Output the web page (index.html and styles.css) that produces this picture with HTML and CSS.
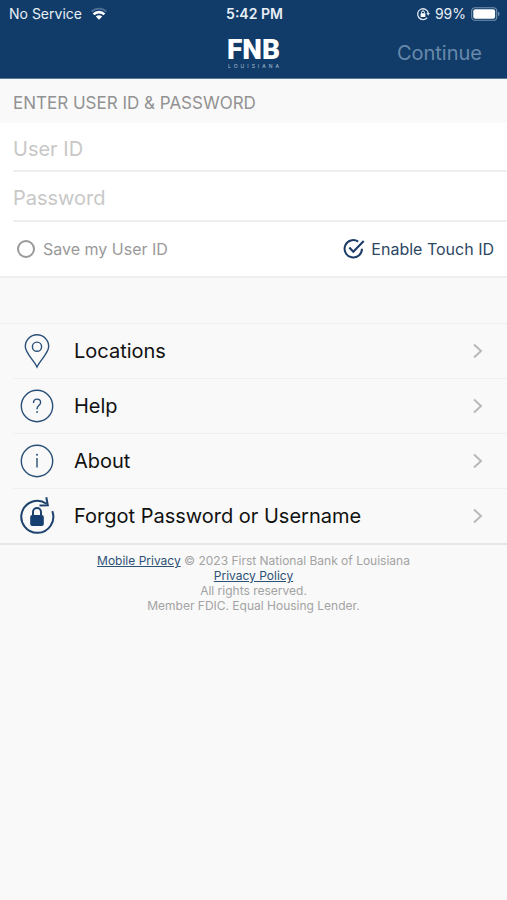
FILE: index.html
```html
<!DOCTYPE html>
<html lang="en">
<head>
<meta charset="utf-8">
<meta name="viewport" content="width=device-width, initial-scale=1">
<title>FNB Louisiana</title>
<link rel="stylesheet" href="styles.css">
</head>
<body>
<header class="top">
  <div class="status">
    <div class="status-left">
      <span>No Service</span>
      <svg class="wifi" viewBox="0 0 18 13" aria-hidden="true">
        <path d="M1.5 4.6C5.6.5 12.4.5 16.5 4.6" fill="none" stroke="#4d7095" stroke-width="1.8"/>
        <path d="M3.600 7.400C6.500 4.300 11.500 4.300 14.400 7.400" fill="none" stroke="#fff" stroke-width="2.600"/>
        <path d="M5.800 9.400C7.600 7.900 10.400 7.900 12.200 9.400L9 12.700Z" fill="#fff"/>
      </svg>
    </div>
    <span class="clock">5:42 PM</span>
    <div class="status-right">
      <svg class="lock-icon" viewBox="0 0 14 14" aria-hidden="true">
        <path d="M11.2 10.6A5.4 5.4 0 1 1 12.3 6" fill="none" stroke="#dfe8f1" stroke-width="1.3"/>
        <path d="M10.3 6h3.7l-1.8 2.8Z" fill="#dfe8f1"/>
        <rect x="4.6" y="6.3" width="4.8" height="3.6" rx=".5" fill="#fff"/>
        <path d="M5.6 6.5V5.3a1.4 1.4 0 0 1 2.8 0v1.2" fill="none" stroke="#fff"/>
      </svg>
      <span>99%</span>
      <svg class="battery" viewBox="0 0 29 14" aria-hidden="true">
        <rect x=".7" y=".7" width="25" height="12.6" rx="3.4" fill="none" stroke="#7592ae" stroke-width="1.1"/>
        <rect x="2.3" y="2.3" width="21.8" height="9.4" rx="2" fill="#fff"/>
        <path d="M27 4.8c2 .6 2 3.8 0 4.4Z" fill="#7592ae"/>
      </svg>
    </div>
  </div>
  <div class="nav">
    <div class="logo"><span class="logo-name">FNB</span><span class="logo-state">LOUISIANA</span></div>
    <button class="continue" type="button">Continue</button>
  </div>
</header>
<main>
  <form class="login">
    <h1 class="section-title">ENTER USER ID &amp; PASSWORD</h1>
    <div class="fields">
      <input class="field" type="text" placeholder="User ID" aria-label="User ID">
      <input class="field" type="password" placeholder="Password" aria-label="Password">
      <div class="options">
        <label class="option"><input class="radio" type="checkbox">Save my User ID</label>
        <label class="option touch"><input class="touch-input" type="checkbox" checked>
          <svg class="check" viewBox="0 0 22 22" aria-hidden="true">
            <path d="M15.2 3.6A8.7 8.7 0 1 0 19 10.7" fill="none" stroke="#1b3c66" stroke-width="2"/>
            <path d="M6.3 9.6l4 4.1L20.7 3" fill="none" stroke="#1b3c66" stroke-width="2.1"/>
          </svg>Enable Touch ID</label>
      </div>
    </div>
  </form>
  <nav class="menu">
    <a class="item" href="#locations">
      <svg class="icon" viewBox="0 0 36 36" fill="none" stroke="#2a5078" stroke-width="1.4" aria-hidden="true">
        <path d="M18 34C15.400 28 6.300 20 6.300 13.500a11.700 11.700 0 0 1 23.400 0C29.700 20 20.600 28 18 34Z"/>
        <circle cx="18" cy="13.700" r="4.600"/>
      </svg>
      <span class="label">Locations</span>
      <svg class="chevron" viewBox="0 0 10 16" aria-hidden="true"><path d="M1 1.500 8 8l-7 6.500"/></svg>
    </a>
    <a class="item" href="#help">
      <svg class="icon" viewBox="0 0 36 36" fill="none" stroke="#2a5078" stroke-width="1.4" aria-hidden="true">
        <circle cx="18" cy="18" r="15.700"/>
        <path d="M14.500 15c0-2.600 1.500-3.900 3.600-3.900s3.500 1.300 3.500 3.300c0 3.100-3.500 3.100-3.500 6.100v.8"/>
        <circle cx="18.100" cy="24" r=".9" fill="#2a5078" stroke="none"/>
      </svg>
      <span class="label">Help</span>
      <svg class="chevron" viewBox="0 0 10 16" aria-hidden="true"><path d="M1 1.500 8 8l-7 6.500"/></svg>
    </a>
    <a class="item" href="#about">
      <svg class="icon" viewBox="0 0 36 36" fill="none" stroke="#2a5078" stroke-width="1.4" aria-hidden="true">
        <circle cx="18" cy="18" r="15.700"/>
        <path d="M18 15v9.500"/>
        <circle cx="18" cy="11.700" r="1" fill="#2a5078" stroke="none"/>
      </svg>
      <span class="label">About</span>
      <svg class="chevron" viewBox="0 0 10 16" aria-hidden="true"><path d="M1 1.500 8 8l-7 6.500"/></svg>
    </a>
    <a class="item" href="#forgot">
      <svg class="icon" viewBox="0 0 36 36" fill="none" stroke="#1c426d" stroke-width="2" aria-hidden="true">
        <path d="M33.300 13.200A16 16 0 1 1 27.500 5.700"/>
        <path d="M20.500 7.500 28.800 7.200 27.300-.7"/>
        <rect x="11.200" y="17" width="13.600" height="11" rx="2" fill="#153f70" stroke="none"/>
        <path d="M14 18v-4a4 4 0 0 1 8 0v4"/>
      </svg>
      <span class="label">Forgot Password or Username</span>
      <svg class="chevron" viewBox="0 0 10 16" aria-hidden="true"><path d="M1 1.500 8 8l-7 6.500"/></svg>
    </a>
  </nav>
</main>
<footer class="footer">
  <div><a href="#mobile-privacy">Mobile Privacy</a> © 2023 First National Bank of Louisiana</div>
  <div><a href="#privacy-policy">Privacy Policy</a></div>
  <div>All rights reserved.</div>
  <div>Member FDIC. Equal Housing Lender.</div>
</footer>
</body>
</html>
```

FILE: styles.css
```css
* {
  box-sizing: border-box;
}

body {
  margin: 0;
  min-height: 100vh;
  background: #f9f9f9;
  color: #111;
  font-family: Inter, "Liberation Sans", sans-serif;
}

.top {
  background: #113c69;
  color: #fff;
  border-bottom: 1px solid #587996;
}

.status {
  display: grid;
  grid-template-columns: 1fr auto 1fr;
  align-items: center;
  height: 27px;
  padding: 0 7px 0 9px;
  font-size: 14px;
  color: #e8eff6;
}

.status-left,
.status-right {
  display: flex;
  align-items: center;
  gap: 8px;
}

.status-right {
  justify-content: flex-end;
  gap: 5px;
}

.clock {
  font-weight: 600;
}

.wifi {
  width: 18px;
  height: 13px;
}

.lock-icon {
  width: 14px;
  height: 14px;
}

.battery {
  width: 29px;
  height: 14px;
}

.nav {
  display: grid;
  grid-template-columns: 1fr auto 1fr;
  align-items: center;
  height: 51px;
  padding: 0 25px;
}

.logo {
  grid-column: 2;
  display: flex;
  flex-direction: column;
  align-items: center;
}

.logo-name {
  font: 900 28px/26px Roboto, sans-serif;
}

.logo-state {
  padding-left: 3px;
  font-size: 5px;
  line-height: 6px;
  letter-spacing: 3px;
  color: #b0c2d4;
}

.continue {
  justify-self: end;
  border: 0;
  padding: 0;
  background: none;
  color: #6889ab;
  font: 20px/24px Inter, sans-serif;
}

.section-title {
  margin: 0;
  padding: 4px 13px 0;
  color: #929292;
  font-size: 17px;
  font-weight: 400;
  line-height: 40px;
}

.fields {
  padding-left: 13px;
  background: #fff;
  border-bottom: 2px solid #eee;
}

.field {
  display: block;
  width: 100%;
  height: 50px;
  border: 0;
  border-bottom: 2px solid #eee;
  border-radius: 0;
  padding: 4px 0 0;
  outline: 0;
  background: none;
  font: 20px/24px Inter, sans-serif;
}

.field:first-child {
  height: 49px;
}

.field::placeholder {
  color: #c8c8c8;
  opacity: 1;
}

.options {
  display: flex;
  justify-content: space-between;
  align-items: center;
  height: 54px;
  padding: 0 13px 0 4px;
}

.option {
  display: flex;
  align-items: center;
  gap: 8px;
  color: #999;
  font-size: 16px;
}

.radio {
  appearance: none;
  width: 18px;
  height: 18px;
  margin: 0;
  border: 2px solid #999;
  border-radius: 50%;
}

.touch {
  position: relative;
  gap: 6px;
  color: #2d4764;
}

.touch-input {
  position: absolute;
  left: 0;
  width: 22px;
  height: 22px;
  margin: 0;
  opacity: 0;
}

.check {
  width: 22px;
  height: 22px;
}

.menu {
  margin-top: 45px;
  border-top: 1px solid #eee;
  border-bottom: 2px solid #e6e6e6;
}

.item {
  display: flex;
  align-items: center;
  height: 54px;
  padding: 0 24px 0 19px;
  color: #111;
  font-size: 20px;
  text-decoration: none;
}

.item + .item {
  height: 55px;
  margin-left: 13px;
  padding-left: 6px;
  border-top: 1px solid #f0f0f0;
}

.icon {
  width: 36px;
  height: 36px;
  overflow: visible;
}

.label {
  flex: 1;
  margin-left: 19px;
}

.chevron {
  width: 10px;
  height: 16px;
  fill: none;
  stroke: #b9b9b9;
  stroke-width: 2;
}

.footer {
  padding: 8px;
  color: #a3a3a3;
  font-size: 12px;
  line-height: 15px;
  text-align: center;
}

.footer a {
  color: #2e5276;
}
```
